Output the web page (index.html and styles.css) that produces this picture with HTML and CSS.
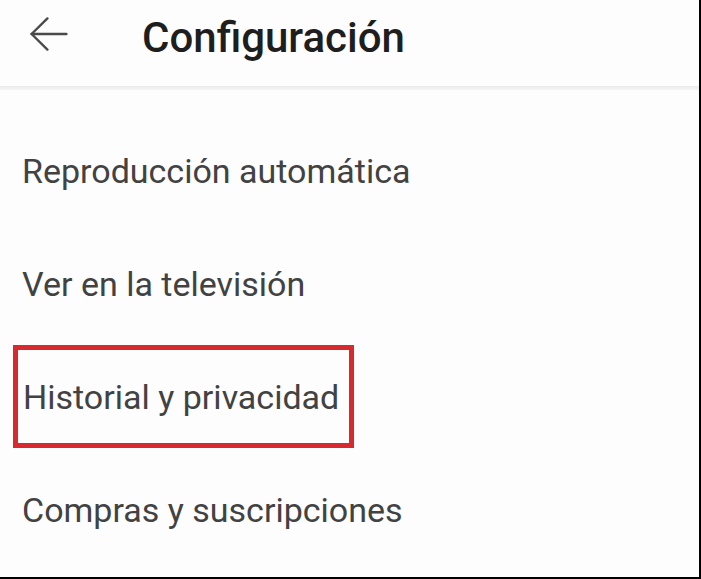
FILE: index.html
```html
<!DOCTYPE html>
<html lang="es">
<head>
<meta charset="utf-8">
<title>Configuración</title>
<link rel="stylesheet" href="styles.css">
</head>
<body>
<div class="screen">
  <header class="appbar">
    <span class="back">
      <svg width="38" height="34" viewBox="0 0 38 34" fill="none" stroke="#4a4a4a" stroke-width="2.4" stroke-linecap="round" stroke-linejoin="round">
        <path d="M1.6 17 H36.4"/>
        <path d="M17.4 1.4 L1.6 17 L17.4 32.6"/>
      </svg>
    </span>
    <h1 class="title">Configuración</h1>
  </header>
  <div class="divider"></div>
  <ul class="menu">
    <li class="item">Reproducción automática</li>
    <li class="item">Ver en la televisión</li>
    <li class="item highlighted">Historial y privacidad</li>
    <li class="item">Compras y suscripciones</li>
  </ul>
</div>
</body>
</html>
```
FILE: styles.css
```css
html, body {
  margin: 0;
  padding: 0;
  background: #ffffff;
}
.screen {
  width: 701px;
  height: 579px;
  box-sizing: border-box;
  border-right: 2px solid #000;
  border-bottom: 2px solid #000;
  background: #fdfdfd;
  font-family: Roboto, "Liberation Sans", sans-serif;
  overflow: hidden;
}
.appbar {
  height: 86px;
  display: flex;
  align-items: flex-start;
}
.back {
  display: flex;
  margin: 17px 0 0 30px;
  width: 38px;
  height: 34px;
}
.title {
  margin: 13px 0 0 74px;
  font-size: 42px;
  line-height: 50px;
  font-weight: 500;
  color: #1e1e1e;
}
.divider {
  height: 4px;
  background: linear-gradient(#ebebeb, #f4f4f4);
}
.menu {
  list-style: none;
  margin: 0;
  padding: 24px 0 0;
}
.item {
  box-sizing: border-box;
  height: 113px;
  padding: 37px 0 0 22px;
  font-size: 34px;
  line-height: 40px;
  color: #424242;
}
.highlighted {
  width: 341px;
  height: 103px;
  margin: 5px 0 5px 13px;
  padding: 27px 0 0 5px;
  border: 5px solid #d72a2f;
}
```
